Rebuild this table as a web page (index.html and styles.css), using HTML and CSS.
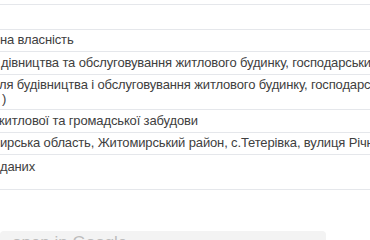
FILE: index.html
```html
<!DOCTYPE html>
<html lang="uk">
<head>
<meta charset="utf-8">
<link rel="stylesheet" href="styles.css">
</head>
<body>
<div class="page">
  <div class="table">
    <div class="row row-empty"><span class="cell"></span></div>
    <div class="row row-tight"><span class="cell">на власність</span></div>
    <div class="row"><span class="cell cell-nudge">дівництва та обслуговування житлового будинку, господарських будівель і споруд (присадибна ділянка)</span></div>
    <div class="row row-two"><span class="cell cell-clip">ля будівництва і обслуговування житлового будинку, господарських будівель і споруд (присадибна</span><span class="cell cell-tail">)</span></div>
    <div class="row"><span class="cell cell-clip-wide">житлової та громадської забудови</span></div>
    <div class="row row-tight"><span class="cell">ирська область, Житомирський район, с.Тетерівка, вулиця Річна</span></div>
    <div class="row row-last"><span class="cell">даних</span></div>
  </div>
  <div class="map-btn"><span class="map-label">open in Google</span></div>
</div>
</body>
</html>
```
FILE: styles.css
```css
html, body {
  margin: 0;
  padding: 0;
  background: #ffffff;
}
body {
  overflow: hidden;
  font-family: "Liberation Sans", Arial, sans-serif;
  color: #404040;
}
.page {
  padding-top: 4px;
}
.table {
  display: flex;
  flex-direction: column;
  border-bottom: 1px solid #e5e7eb;
}
.row {
  border-top: 1px solid #e5e7eb;
  padding: 4px 0 4px 0;
  font-size: 13px;
  line-height: 14px;
  letter-spacing: -0.14px;
  min-height: 14px;
  overflow: hidden;
}
.row-empty {
  padding: 5px 0;
}
.row-tight {
  padding: 3px 0 4px 0;
}
.row-two {
  padding: 3px 0 3px 0;
}
.row-last {
  padding: 5px 0 15px 0;
}
.cell {
  display: block;
  white-space: nowrap;
}
.cell-nudge {
  margin-left: 1px;
}
.cell-clip {
  margin-left: -1px;
}
.cell-clip-wide {
  margin-left: -4px;
}
.cell-tail {
  padding-left: 2px;
}
.map-btn {
  margin-top: 41px;
  width: 326px;
  height: 30px;
  background: #f3f3f3;
  border-radius: 4px;
  overflow: hidden;
}
.map-label {
  display: block;
  padding: 2px 0 0 12px;
  font-size: 17px;
  line-height: 20px;
  color: #bdbdbd;
}
```
